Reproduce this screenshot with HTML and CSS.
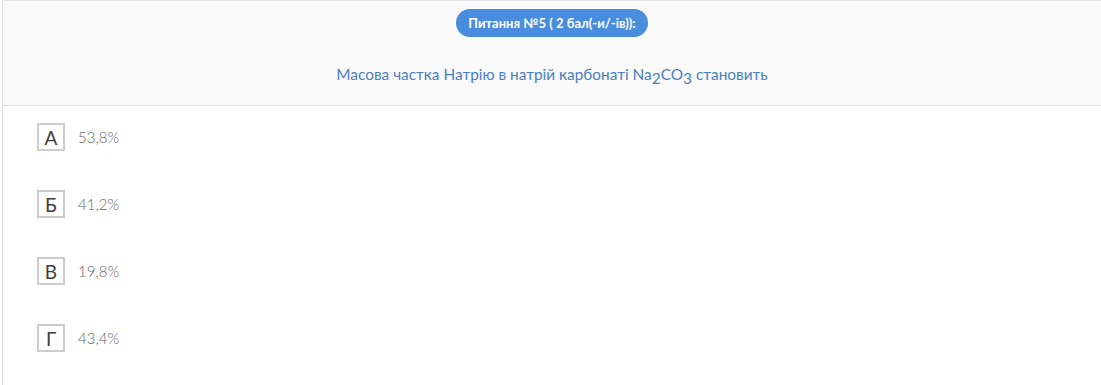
FILE: index.html
```html
<!DOCTYPE html>
<html lang="uk">
<head>
<meta charset="utf-8">
<link rel="stylesheet" href="styles.css">
</head>
<body>
<div class="question">
  <div class="q-head">
    <div class="badge">Питання №5 ( 2 бал(-и/-ів)):</div>
    <div class="q-text">Масова частка Натрію в натрій карбонаті Na<sub>2</sub>CO<sub>3</sub> становить</div>
  </div>
  <div class="answers">
    <div class="answer"><span class="letter">А</span><span class="val">53,8%</span></div>
    <div class="answer"><span class="letter">Б</span><span class="val">41,2%</span></div>
    <div class="answer"><span class="letter">В</span><span class="val">19,8%</span></div>
    <div class="answer"><span class="letter">Г</span><span class="val">43,4%</span></div>
  </div>
</div>
</body>
</html>
```
FILE: styles.css
```css
html, body {
  margin: 0;
  padding: 0;
  background: #ffffff;
  font-family: Lato, "Open Sans", "Liberation Sans", sans-serif;
}
.question {
  margin-left: 2px;
  border-left: 1px solid #dcdcdc;
  border-top: 1px solid #e6e6e6;
  height: 384px;
}
.q-head {
  background: #f9f9f9;
  border-bottom: 1px solid #e2e2e2;
  display: flex;
  flex-direction: column;
  align-items: center;
  padding: 8px 0 21px;
}
.badge {
  background: #4a8ddf;
  color: #ffffff;
  font-weight: 700;
  font-size: 13px;
  height: 28px;
  line-height: 28px;
  padding: 0 12px;
  border-radius: 14px;
}
.q-text {
  margin-top: 27px;
  color: #4b7fc1;
  font-size: 15.4px;
  line-height: 20px;
}
.q-text sub {
  font-size: 15.4px;
  vertical-align: -4px;
  line-height: 0;
}
.answers {
  display: flex;
  flex-direction: column;
  gap: 39px;
  padding: 17px 0 0 34px;
}
.answer {
  display: flex;
  align-items: center;
  height: 28px;
}
.letter {
  box-sizing: border-box;
  width: 28px;
  height: 28px;
  border: 2px solid #cccccc;
  display: flex;
  align-items: center;
  justify-content: center;
  font-size: 19px;
  color: #3d3d3d;
}
.val {
  margin-left: 13px;
  font-size: 15px;
  color: #666666;
  font-weight: 300;
}
```
